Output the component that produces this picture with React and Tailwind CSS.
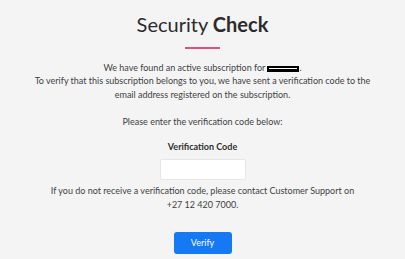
import React from 'react';

const App = () => {
  return (
    <div className="min-h-screen w-full bg-[#f4f4f5] font-['Lato','Liberation_Sans',sans-serif] text-[#3f3f3f] flex flex-col items-center pt-[12px]">
      <h1 className="text-[20px] leading-[24px] text-[#2b2b2b]">
        Security <span className="font-bold">Check</span>
      </h1>
      <div className="mt-[11px] w-[35px] h-[2px] bg-[#d94f86]" />

      <div className="mt-[12px] text-center text-[9px] leading-[14px]">
        <p>
          We have found an active subscription for{' '}
          <span className="inline-block align-middle w-[32px] h-[6px] bg-black border-[2px] border-black">
            <span className="block w-full h-[1px] bg-white" />
          </span>
          .
        </p>
        <p className="-mt-[1px]">To verify that this subscription belongs to you, we have sent a verification code to the</p>
        <p>email address registered on the subscription.</p>
        <p className="mt-[13px]">Please enter the verification code below:</p>
      </div>

      <label className="mt-[11px] text-[9px] leading-[14px] font-bold text-[#2f2f2f]">Verification Code</label>
      <input
        type="text"
        className="mt-[5px] w-[86px] h-[21px] bg-white border border-[#e6e6e6] rounded-[2px] outline-none"
      />

      <div className="mt-[4px] text-center text-[9px] leading-[14px]">
        <p>If you do not receive a verification code, please contact Customer Support on</p>
        <p>+27 12 420 7000.</p>
      </div>

      <button className="mt-[20px] w-[58px] h-[22px] rounded-[3px] bg-[#1479f3] text-white text-[9px]">
        Verify
      </button>
    </div>
  );
};

export default App;
